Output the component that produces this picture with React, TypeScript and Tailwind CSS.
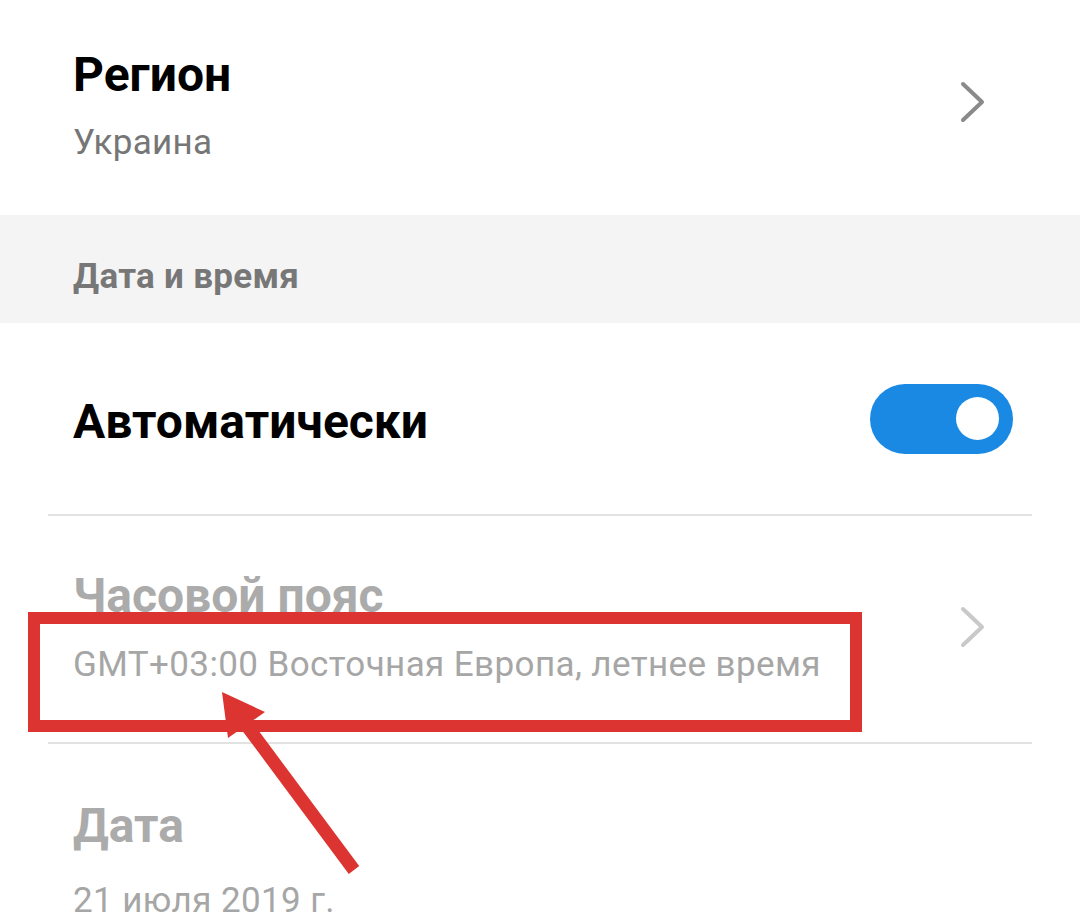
import React from "react";

const font = { fontFamily: "Roboto, 'Noto Sans', sans-serif" };

function Chevron({ light }: { light?: boolean }) {
  return (
    <svg width="28" height="42" viewBox="0 0 28 42" className="shrink-0">
      <polyline
        points="3,3 22,21 3,39"
        fill="none"
        stroke={light ? "#c9c9c9" : "#8a8a8a"}
        strokeWidth="4"
        strokeLinecap="round"
        strokeLinejoin="round"
      />
    </svg>
  );
}

function Toggle() {
  return (
    <div className="w-[143px] h-[70px] rounded-full bg-[#1989e4] flex items-center justify-end pr-[14px] shrink-0">
      <div className="w-[43px] h-[43px] rounded-full bg-white" />
    </div>
  );
}

export default function App() {
  return (
    <div className="relative w-[1080px] h-[912px] overflow-hidden bg-white" style={font}>
      {/* Регион */}
      <div className="h-[215px] flex items-start justify-between pl-[73px] pr-[92px]">
        <div className="pt-[43px]">
          <div className="text-[48px] leading-[64px] font-bold text-black">Регион</div>
          <div className="mt-[14px] text-[35px] leading-[44px] tracking-[0.3px] text-[#767676]">Украина</div>
        </div>
        <div className="pt-[81px]">
          <Chevron />
        </div>
      </div>

      {/* Заголовок секции */}
      <div className="h-[108px] bg-[#f4f4f4] flex items-center pl-[73px]">
        <div className="text-[35px] leading-[40px] font-bold tracking-[0.3px] text-[#777777] pt-[15px]">Дата и время</div>
      </div>

      {/* Автоматически */}
      <div className="h-[191px] flex items-center justify-between pl-[73px] pr-[67px]">
        <div className="text-[48px] leading-[64px] font-bold text-black pt-[6px]">Автоматически</div>
        <Toggle />
      </div>
      <div className="mx-[48px] h-[2px] bg-[#e2e2e2]" />

      {/* Часовой пояс */}
      <div className="h-[226px] flex items-start justify-between pl-[73px] pr-[92px]">
        <div className="pt-[48px]">
          <div className="text-[48px] leading-[64px] font-bold text-[#ababab]">Часовой пояс</div>
          <div className="mt-[15px] text-[35px] leading-[44px] tracking-[0.4px] text-[#a6a6a6]">
            GMT+03:00 Восточная Европа, летнее время
          </div>
        </div>
        <div className="pt-[90px]">
          <Chevron light />
        </div>
      </div>
      <div className="mx-[48px] h-[2px] bg-[#e2e2e2]" />

      {/* Дата */}
      <div className="flex items-start pl-[73px]">
        <div className="pt-[50px]">
          <div className="text-[48px] leading-[64px] font-bold text-[#ababab]">Дата</div>
          <div className="mt-[21px] text-[35px] leading-[44px] tracking-[0.4px] text-[#a6a6a6]">21 июля 2019 г.</div>
        </div>
      </div>

      {/* Выделение */}
      <div className="absolute left-[28px] top-[612px] w-[834px] h-[120px] border-[12px] border-[#dc3431]" />
      <svg className="absolute left-0 top-0 pointer-events-none" width="1080" height="912">
        <line x1="244" y1="722" x2="354" y2="870" stroke="#dc3431" strokeWidth="13" />
        <polygon points="222,692 265,712 228,738" fill="#dc3431" />
      </svg>
    </div>
  );
}
